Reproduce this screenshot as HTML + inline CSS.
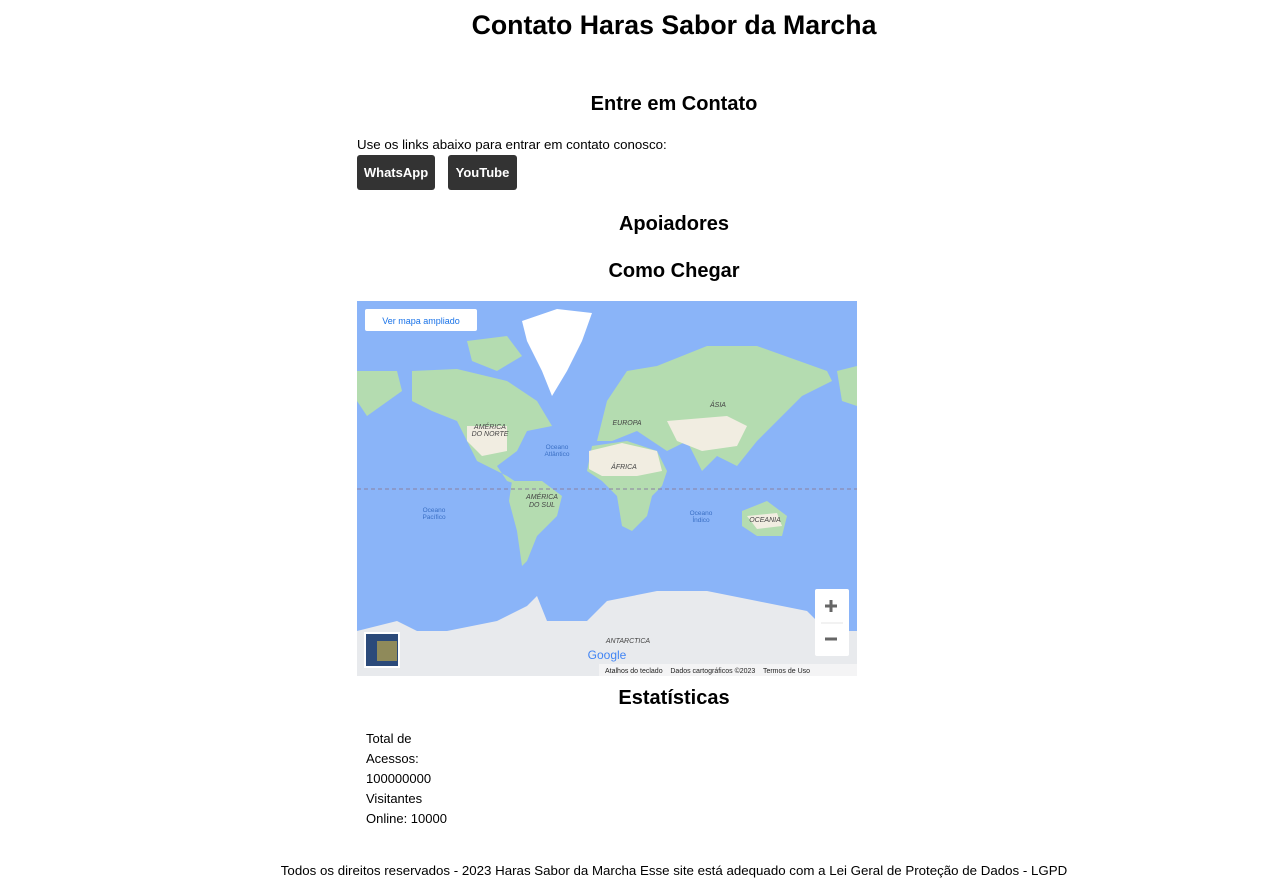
<!DOCTYPE html>
<html><head><meta charset="utf-8"><style>
body{margin:0;background:#fff;font-family:"Liberation Sans",Arial,sans-serif;color:#000;width:1270px;height:892px;position:relative;overflow:hidden}
.a{position:absolute}
h1,h2{margin:0;font-weight:bold;position:absolute;left:357px;width:634px;text-align:center}
h1{font-size:26.7px;top:10px}
h2{font-size:20px}
.btn{position:absolute;top:155px;height:35px;background:#333;color:#fff;border-radius:3px;font-size:13px;font-weight:bold;line-height:35px;text-align:center}
.stats{position:absolute;left:366px;top:729px;font-size:13px;line-height:20px;width:95px}
</style></head><body>
<h1>Contato Haras Sabor da Marcha</h1>
<h2 style="top:93px">Entre em Contato</h2>
<div class="a" style="left:357px;top:137px;font-size:13.3px">Use os links abaixo para entrar em contato conosco:</div>
<div class="btn" style="left:357px;width:78px">WhatsApp</div>
<div class="btn" style="left:448px;width:69px">YouTube</div>
<h2 style="top:213px">Apoiadores</h2>
<h2 style="top:260px">Como Chegar</h2>
<svg class="a" style="left:357px;top:301px" width="500" height="375" viewBox="0 0 500 375">
<rect width="500" height="375" fill="#8ab4f8"/>
<g fill="#b4dcb0">
<polygon points="55,70 100,68 150,80 180,100 195,125 170,130 160,150 140,165 150,180 165,185 150,175 120,160 110,140 100,120 75,110 55,100"/>
<polygon points="0,70 40,70 45,90 10,115 0,100"/>
<polygon points="480,70 500,65 500,105 485,100"/>
<polygon points="155,180 185,180 205,195 200,215 180,235 170,260 165,265 160,230 152,200"/>
<polygon points="235,145 270,140 300,150 310,170 305,185 295,195 290,215 275,230 265,225 260,195 245,180 230,170"/>
<polygon points="240,140 250,100 270,70 300,65 350,45 400,45 470,70 475,80 445,95 420,120 400,140 380,165 360,155 345,170 330,140 310,150 280,130 255,140"/>
<polygon points="385,210 410,200 430,215 425,235 400,235 385,225"/>
<polygon points="110,40 150,35 165,55 140,70 115,60"/>
</g>
<g fill="#f1ede1">
<polygon points="110,125 150,125 150,150 125,155 110,140"/>
<polygon points="232,150 265,142 300,150 305,170 280,175 245,175 232,168"/>
<polygon points="310,120 370,115 390,125 380,145 345,150 320,140"/>
<polygon points="390,215 420,212 425,225 400,228"/>
<polygon points="165,20 200,8 235,12 225,40 210,70 195,95 185,70 170,40" fill="#fff"/>
<polygon points="0,330 40,320 60,330 90,330 140,320 170,305 180,295 190,320 230,320 250,300 300,290 350,290 400,300 450,310 470,330 500,330 500,375 0,375" fill="#e8eaed"/>
</g>
<line x1="0" y1="188" x2="500" y2="188" stroke="#8a7fa0" stroke-dasharray="4,3"/>
<g font-family="Liberation Sans,sans-serif" font-size="7" fill="#444" font-style="italic" text-anchor="middle">
<text x="133" y="128">AMÉRICA</text><text x="133" y="135">DO NORTE</text>
<text x="185" y="198">AMÉRICA</text><text x="185" y="206">DO SUL</text>
<text x="270" y="124">EUROPA</text><text x="267" y="168">ÁFRICA</text>
<text x="361" y="106">ÁSIA</text><text x="408" y="221">OCEANIA</text>
<text x="271" y="342">ANTARCTICA</text>
</g>
<g font-family="Liberation Sans,sans-serif" font-size="6.5" fill="#3a6fc4" text-anchor="middle">
<text x="200" y="148">Oceano</text><text x="200" y="155">Atlântico</text>
<text x="77" y="211">Oceano</text><text x="77" y="218">Pacífico</text>
<text x="344" y="214">Oceano</text><text x="344" y="221">Índico</text>
</g>
<rect x="8" y="8" width="112" height="22" rx="2" fill="#fff"/>
<text x="64" y="23" font-family="Liberation Sans,sans-serif" font-size="9" fill="#1a73e8" text-anchor="middle">Ver mapa ampliado</text>
<rect x="458" y="288" width="34" height="67" rx="2" fill="#fff"/>
<line x1="464" y1="322" x2="486" y2="322" stroke="#e6e6e6"/>
<path d="M468 305h12M474 299v12M468 338h12" stroke="#666" stroke-width="3"/>
<rect x="8" y="332" width="34" height="34" fill="#2b4a7a" stroke="#fff" stroke-width="2"/>
<rect x="20" y="340" width="20" height="20" fill="#8f8a5a"/>
<text x="250" y="358" font-family="Liberation Sans,sans-serif" font-size="12" fill="#4285f4" text-anchor="middle">Google</text>
<rect x="242" y="363" width="258" height="12" fill="#f5f5f5" opacity=".9"/>
<text x="248" y="372" font-family="Liberation Sans,sans-serif" font-size="7" fill="#222" xml:space="preserve">Atalhos do teclado    Dados cartográficos ©2023    Termos de Uso</text>
</svg>
<h2 style="top:687px">Estatísticas</h2>
<div class="stats">Total de Acessos: 100000000<br>Visitantes Online: 10000</div>
<div class="a" style="left:0;width:1348px;top:863px;text-align:center;font-size:13.3px">Todos os direitos reservados - 2023 Haras Sabor da Marcha Esse site está adequado com a Lei Geral de Proteção de Dados - LGPD</div>
</body></html>
